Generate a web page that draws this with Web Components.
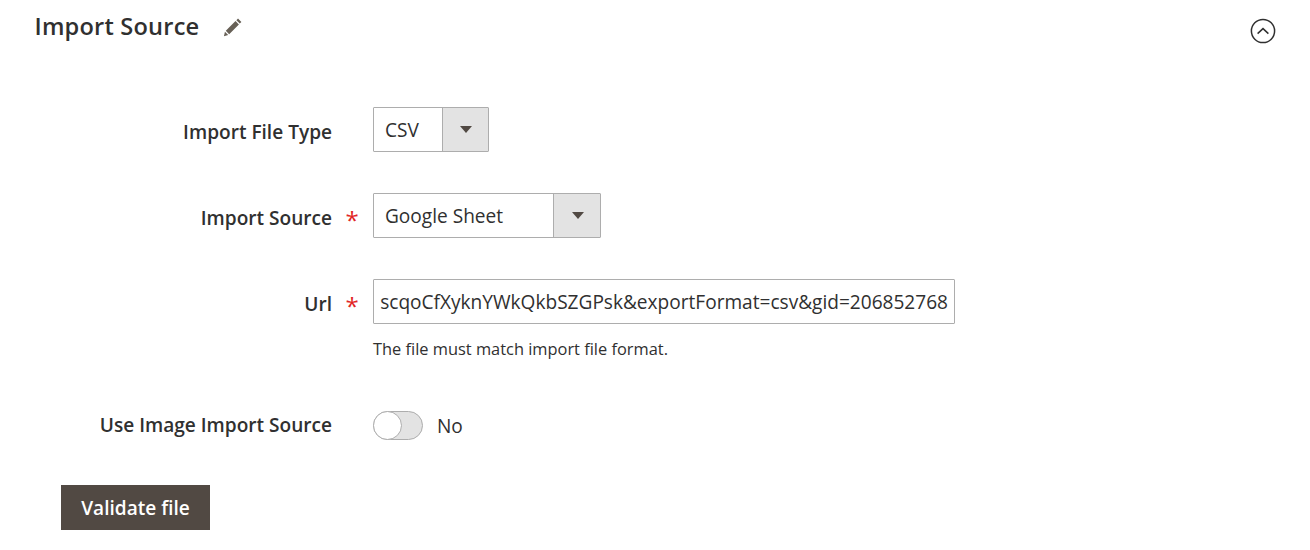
<!DOCTYPE html>
<html>
<head>
<meta charset="utf-8">
<title>Import Source</title>
<style>
  html, body { margin: 0; background: #fff; }
  body { font-family: "Open Sans", sans-serif; color: #303030; }
</style>
</head>
<body>
<import-form></import-form>

<script>
// section header with the title, edit pencil and collapse button
class SectionHeader extends HTMLElement {
  constructor() {
    super();
    const shadow = this.attachShadow({ mode: 'open' });
    shadow.innerHTML = `
    <style>
      :host { display: flex; align-items: flex-start; height: 107px; padding-left: 34.5px; padding-right: 34.5px; box-sizing: border-box; }
      .title { font-size: 23.6px; line-height: 30px; margin-top: 11px; font-weight: 600; letter-spacing: 0.2px; color: #303030; }
      .edit { margin-left: 22px; margin-top: 15px; width: 24px; height: 24px; }
      .spacer { flex: 1; }
      .toggle { margin-top: 18px; width: 26px; height: 26px; }
    </style>
    <div class="title"><slot></slot></div>
    <svg class="edit" viewBox="0 0 22 22">
      <path fill="#676056" d="M15.6 3.3l3.1 3.1-1.5 1.5-3.1-3.1zM13.3 5.6l3.1 3.1-8.9 8.9-3.1-3.1zM3.6 15.4l3 3-3.9 1z"/>
    </svg>
    <div class="spacer"></div>
    <svg class="toggle" viewBox="0 0 26 26">
      <circle cx="13" cy="13" r="11.6" fill="none" stroke="#303030" stroke-width="1.5"/>
      <path d="M7.6 15.6L13 10.6l5.4 5" fill="none" stroke="#303030" stroke-width="1.5"/>
    </svg>`;
  }
}
customElements.define('section-header', SectionHeader);

// one label + control row of the form
class FormRow extends HTMLElement {
  constructor() {
    super();
    const shadow = this.attachShadow({ mode: 'open' });
    shadow.innerHTML = `
    <style>
      :host { display: grid; grid-template-columns: 332px 41px 1fr; align-items: start; margin-bottom: 41px; }
      .label { text-align: right; font-size: 19.08px; line-height: 26px; font-weight: 600; color: #303030; padding-top: var(--label-top, 12px); }
      .star { color: #e22626; font-size: 24px; line-height: 26px; padding-top: 14px; padding-left: 13.5px; font-weight: 400; }
    </style>
    <div class="label"></div>
    <div class="star"></div>
    <div class="control"><slot></slot></div>`;
    shadow.querySelector('.label').textContent = this.getAttribute('label');
    if (this.hasAttribute('required')) shadow.querySelector('.star').textContent = '*';
  }
}
customElements.define('form-row', FormRow);

class SelectBox extends HTMLElement {
  constructor() {
    super();
    const shadow = this.attachShadow({ mode: 'open' });
    shadow.innerHTML = `
    <style>
      :host { display: inline-flex; height: 45px; box-sizing: border-box; border: 1px solid #adadad; background: #fff; font-size: 19.08px; color: #303030; border-radius: 1px; vertical-align: top; }
      .value { display: flex; align-items: center; padding-left: 11px; box-sizing: border-box; }
      .arrow { display: flex; align-items: center; justify-content: center; background: #e3e3e3; border-left: 1px solid #adadad; box-sizing: border-box; padding-left: 1px; }
      .arrow i { border-top: 7px solid #514943; border-left: 6px solid transparent; border-right: 6px solid transparent; }
    </style>
    <div class="value"><slot></slot></div>
    <div class="arrow"><i></i></div>`;
    shadow.querySelector('.value').style.width = this.getAttribute('value-width') + 'px';
    shadow.querySelector('.arrow').style.width = this.getAttribute('arrow-width') + 'px';
  }
}
customElements.define('select-box', SelectBox);

// url field, long value shown scrolled to its end
class TextField extends HTMLElement {
  constructor() {
    super();
    const shadow = this.attachShadow({ mode: 'open' });
    shadow.innerHTML = `
    <style>
      :host { display: block; width: 582px; }
      .box { height: 45px; box-sizing: border-box; border: 1px solid #adadad; border-radius: 1px; padding: 0 6px; background: #fff; }
      .inner { height: 100%; display: flex; align-items: center; justify-content: flex-end; overflow: hidden; white-space: nowrap; font-size: 19.08px; color: #303030; }
      .inner span { flex: none; }
      .note { font-size: 16.4px; line-height: 22px; margin-top: 14px; color: #303030; }
    </style>
    <div class="box"><div class="inner"><span><slot></slot></span></div></div>
    <div class="note"></div>`;
    shadow.querySelector('.note').textContent = this.getAttribute('note');
  }
}
customElements.define('text-field', TextField);

class ToggleSwitch extends HTMLElement {
  constructor() {
    super();
    const shadow = this.attachShadow({ mode: 'open' });
    shadow.innerHTML = `
    <style>
      :host { display: flex; align-items: center; height: 29px; margin-top: 9px; font-size: 19.08px; color: #303030; }
      .track { position: relative; width: 50px; height: 29px; box-sizing: border-box; border: 1px solid #adadad; border-radius: 15px; background: #e3e3e3; margin-right: 14px; }
      .knob { position: absolute; left: -1px; top: -1px; width: 29px; height: 29px; box-sizing: border-box; border: 1px solid #adadad; border-radius: 50%; background: #fff; }
    </style>
    <div class="track"><div class="knob"></div></div>
    <slot></slot>`;
  }
}
customElements.define('toggle-switch', ToggleSwitch);

class ActionButton extends HTMLElement {
  constructor() {
    super();
    const shadow = this.attachShadow({ mode: 'open' });
    shadow.innerHTML = `
    <style>
      :host { display: inline-flex; align-items: center; justify-content: center; width: 149px; height: 45px; background: #514943; color: #fff; font-size: 19.08px; font-weight: 600; }
    </style>
    <slot></slot>`;
  }
}
customElements.define('action-button', ActionButton);

// the whole import source block
class ImportForm extends HTMLElement {
  constructor() {
    super();
    const shadow = this.attachShadow({ mode: 'open' });
    shadow.innerHTML = `
    <style>
      :host { display: block; width: 1310px; height: 550px; overflow: hidden; font-family: "Open Sans", sans-serif; }
      .actions { padding-left: 61px; margin-top: 45px; }
      .url-row { margin-bottom: 0; }
      .image-row { margin-top: 0; margin-bottom: 0; --label-top: 10px; }
      .gap { height: 42px; }
    </style>
    <section-header>Import Source</section-header>
    <form-row label="Import File Type"><select-box value-width="68" arrow-width="46">CSV</select-box></form-row>
    <form-row label="Import Source" required><select-box value-width="179" arrow-width="47">Google Sheet</select-box></form-row>
    <form-row class="url-row" label="Url" required>
      <text-field note="The file must match import file format.">1scqoCfXyknYWkQkbSZGPsk&amp;exportFormat=csv&amp;gid=206852768</text-field>
    </form-row>
    <div class="gap"></div>
    <form-row class="image-row" label="Use Image Import Source"><toggle-switch>No</toggle-switch></form-row>
    <div class="actions"><action-button>Validate file</action-button></div>`;
  }
}
customElements.define('import-form', ImportForm);
</script>
</body>
</html>
